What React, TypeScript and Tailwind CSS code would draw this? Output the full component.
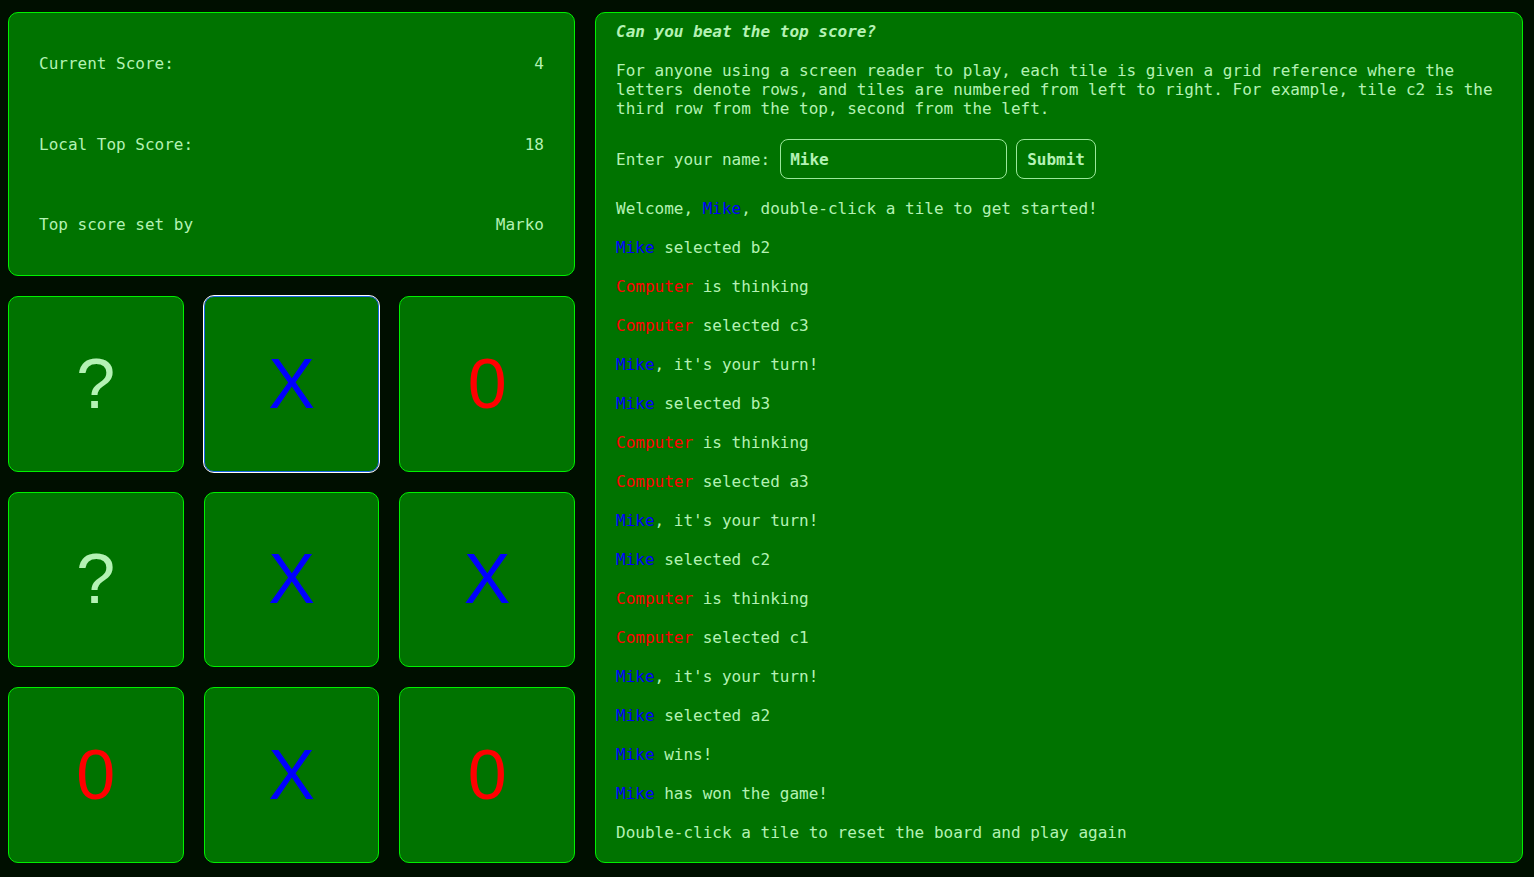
const mono = "font-['DejaVu_Sans_Mono','Liberation_Mono',monospace]"

type Msg = { who: 'user' | 'cpu'; text: string }

const messages: Msg[] = [
  { who: 'user', text: ' selected b2' },
  { who: 'cpu', text: ' is thinking' },
  { who: 'cpu', text: ' selected c3' },
  { who: 'user', text: ", it's your turn!" },
  { who: 'user', text: ' selected b3' },
  { who: 'cpu', text: ' is thinking' },
  { who: 'cpu', text: ' selected a3' },
  { who: 'user', text: ", it's your turn!" },
  { who: 'user', text: ' selected c2' },
  { who: 'cpu', text: ' is thinking' },
  { who: 'cpu', text: ' selected c1' },
  { who: 'user', text: ", it's your turn!" },
  { who: 'user', text: ' selected a2' },
  { who: 'user', text: ' wins!' },
  { who: 'user', text: ' has won the game!' },
]

const tiles = ['?', 'X', '0', '?', 'X', 'X', '0', 'X', '0']

const Tile = ({ value, focused }: { value: string; focused?: boolean }) => {
  const color = value === 'X' ? 'text-[#0000ff]' : value === '0' ? 'text-[#ff0000]' : 'text-[#b4f2b4]'
  return (
    <div
      className={[
        'h-[175.5px] flex items-center justify-center rounded-[10px] bg-[#007300]',
        focused ? 'border border-[#1a66e6] outline-1 outline-white' : 'border border-[#00f000]',
      ].join(' ')}
    >
      <span className={`text-[70px] leading-none font-['Liberation_Sans',Arial,sans-serif] ${color}`}>{value}</span>
    </div>
  )
}

export default function App() {
  return (
    <div className={`min-h-[877px] bg-[#000f00] text-[#b4f2b4] text-[16px] ${mono} flex gap-5 pt-3 pl-2 pr-[11px] pb-[15px]`}>
      <div className="w-[567px] flex flex-col gap-5">
        <div className="h-[264px] rounded-[10px] border border-[#00f000] bg-[#007300] px-[30px] pt-[41px] flex flex-col gap-[61.5px] leading-[19px]">
          <div className="flex justify-between"><span>Current Score:</span><span>4</span></div>
          <div className="flex justify-between"><span>Local Top Score:</span><span>18</span></div>
          <div className="flex justify-between"><span>Top score set by</span><span>Marko</span></div>
        </div>
        <div className="grid grid-cols-3 gap-x-5 gap-y-[20px]">
          {tiles.map((t, i) => (
            <Tile key={i} value={t} focused={i === 1} />
          ))}
        </div>
      </div>

      <div className="flex-1 rounded-[10px] border border-[#00f000] bg-[#007300] px-5 pt-[9px] pb-5 leading-[19px]">
        <p className="font-bold italic">Can you beat the top score?</p>
        <p className="mt-5">
          For anyone using a screen reader to play, each tile is given a grid reference where the letters denote rows, and
          tiles are numbered from left to right. For example, tile c2 is the third row from the top, second from the left.
        </p>
        <div className="mt-[21px] flex items-center">
          <span>Enter your name:</span>
          <input
            defaultValue="Mike"
            className={`ml-[10px] w-[227px] h-10 rounded-[8px] border border-[#9be89b] bg-transparent px-[9px] font-bold text-[#b4f2b4] ${mono}`}
          />
          <button className="ml-[9px] h-10 px-[10px] rounded-[8px] border border-[#9be89b] font-bold">Submit</button>
        </div>
        <div className="mt-5 flex flex-col gap-5">
          <p>
            Welcome, <span className="text-[#0000ff]">Mike</span>, double-click a tile to get started!
          </p>
          {messages.map((m, i) => (
            <p key={i} className="whitespace-pre">
              <span className={m.who === 'user' ? 'text-[#0000ff]' : 'text-[#ff0000]'}>
                {m.who === 'user' ? 'Mike' : 'Computer'}
              </span>
              {m.text}
            </p>
          ))}
          <p>Double-click a tile to reset the board and play again</p>
        </div>
      </div>
    </div>
  )
}
